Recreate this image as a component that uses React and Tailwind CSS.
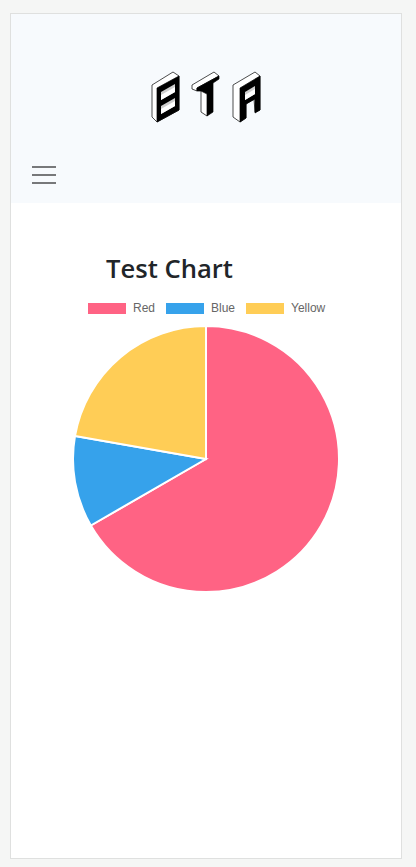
const cx = 133, cy = 133, r = 133;
const pt = (deg) => {
  const a = (deg * Math.PI) / 180;
  return `${cx + r * Math.sin(a)} ${cy - r * Math.cos(a)}`;
};
const slice = (from, to) => `M${cx} ${cy}L${pt(from)}A${r} ${r} 0 ${to - from > 180 ? 1 : 0} 1 ${pt(to)}Z`;

function Logo() {
  return (
    <svg width="110" height="52" viewBox="0 0 110 52" fill="none" stroke="#000" strokeWidth="0.7" strokeLinejoin="round" aria-label="BTA logo">
      {/* B */}
      <path d="M1 14L22 1L28 5V39L6 51L1 46Z" fill="#fff" />
      <path d="M6 17L28 5V39L6 51Z" fill="#000" />
      <path d="M10 21L24 13V21L10 29Z" fill="#cfcfcf" stroke="none" />
      <path d="M10 24L24 16V21L10 29Z" fill="#fff" stroke="none" />
      <path d="M10 35L24 27V35L10 43Z" fill="#cfcfcf" stroke="none" />
      <path d="M10 38L24 30V35L10 43Z" fill="#fff" stroke="none" />
      {/* T */}
      <path d="M41 14L63 1L68 5L46 17V20L41 18Z" fill="#fff" />
      <path d="M46 17L68 5V8L62 12V41L56 45V23L50 20L46 20Z" fill="#000" />
      <path d="M50 20L56 23V45L50 41Z" fill="#fff" />
      {/* A */}
      <path d="M82 14L104 1L109 5V39L104 41L103 28L95 33L95 47L89 51L82 46Z" fill="#fff" />
      <path d="M89 17L109 5V39L104 42V28L95 33V47L89 51Z" fill="#000" />
      <path d="M94 21L104 15V23L94 29Z" fill="#cfcfcf" stroke="none" />
      <path d="M94 24L104 18V23L94 29Z" fill="#fff" stroke="none" />
    </svg>
  );
}

export default function App() {
  return (
    <div className="h-[867px] w-[416px] bg-[#f5f6f5] pl-[10px] pr-[14px] pt-[13px] pb-[8px] font-['Liberation_Sans',sans-serif]">
      <div className="flex h-full flex-col border border-[#dfe0df] bg-white">
        <header className="flex h-[189px] flex-col bg-[#f7fafd]">
          <div className="flex h-[131px] items-end justify-center pb-[22px]">
            <Logo />
          </div>
          <div className="pl-[21px] pt-[21px]">
            <div className="flex w-[24px] flex-col gap-[6px]">
              <div className="h-[2px] bg-[#77787a]" />
              <div className="h-[2px] bg-[#77787a]" />
              <div className="h-[2px] bg-[#77787a]" />
            </div>
          </div>
        </header>
        <main className="flex flex-col">
          <h1 className="pl-[95px] pt-[48px] text-[25.6px] leading-[36px] font-semibold text-[#212529] font-['Open_Sans',sans-serif]">Test Chart</h1>
          <div className="mt-[15px] flex items-center pl-[77px] text-[12px] leading-[12px] text-[#666]">
            <span className="h-[11px] w-[38px] bg-[#ff6384]" />
            <span className="ml-[7px] w-[33px]">Red</span>
            <span className="h-[11px] w-[38px] bg-[#36a2eb]" />
            <span className="ml-[7px] w-[35px]">Blue</span>
            <span className="h-[11px] w-[38px] bg-[#ffcd56]" />
            <span className="ml-[7px]">Yellow</span>
          </div>
          <div className="mt-[12px] pl-[62px]">
            <svg width="266" height="266" viewBox="0 0 266 266" stroke="#fff" strokeWidth="2" className="block">
              <path d={slice(0, 240)} fill="#ff6384" />
              <path d={slice(240, 280)} fill="#36a2eb" />
              <path d={slice(280, 360)} fill="#ffcd56" />
            </svg>
          </div>
        </main>
      </div>
    </div>
  );
}
